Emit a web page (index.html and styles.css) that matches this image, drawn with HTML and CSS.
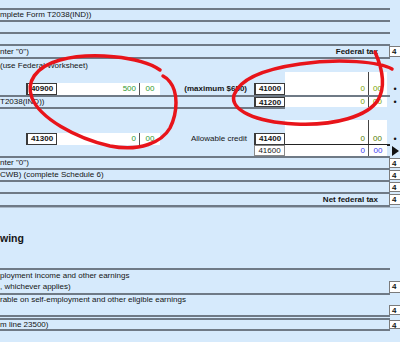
FILE: index.html
```html
<!DOCTYPE html>
<html lang="en">
<head>
    <meta charset="UTF-8">
    <title>Federal tax</title>
    <link rel="stylesheet" href="styles.css">
</head>
<body>
    <div class="form">
        <div class="band h8"></div>
        <div class="band h10"><span class="txt">mplete Form T2038(IND))</span></div>
        <div class="band h10"></div>
        <div class="band h10"></div>
        <div class="band h11">
            <span class="txt">nter "0")</span>
            <span class="lbl">Federal tax</span>
            <span class="tag">4</span>
        </div>

        <!-- 40900 / 41000 -->
        <div class="band block-a">
            <span class="txt first">(use Federal Worksheet)</span>
            <div class="wcol"></div>
            <div class="sep"></div>
            <div class="code left">40900</div>
            <div class="amt field left green">500</div>
            <div class="cents field left green">00</div>
            <span class="mid">(maximum $650)</span>
            <div class="code right">41000</div>
            <span class="amt right lime">0</span>
            <span class="cents right lime">00</span>
            <span class="dot">•</span>
        </div>
        <div class="band h10 short">
            <span class="txt">T2038(IND))</span>
            <div class="wcol"></div>
            <div class="sep"></div>
            <div class="code right">41200</div>
            <span class="amt right lime">0</span>
            <span class="cents right lime">00</span>
            <span class="dot">•</span>
        </div>

        <!-- 41300 / 41400 / 41600 -->
        <div class="band block-b">
            <div class="wcol"></div>
            <div class="sep"></div>
            <div class="code left">41300</div>
            <div class="amt field left green">0</div>
            <div class="cents field left green">00</div>
            <span class="mid plain">Allowable credit</span>
            <div class="code right">41400</div>
            <span class="amt right olive">0</span>
            <span class="cents right olive">00</span>
            <div class="thick"></div>
            <span class="dot">•</span>
            <div class="code right light">41600</div>
            <div class="amt field right blue">0</div>
            <div class="cents field right blue sepl">00</div>
            <span class="arrow"></span>
        </div>

        <div class="band h10"><span class="txt">nter "0")</span><span class="tag">4</span></div>
        <div class="band h10"><span class="txt">CWB) (complete Schedule 6)</span><span class="tag">4</span></div>
        <div class="band h10"><span class="tag">4</span></div>
        <div class="band h11"><span class="lbl">Net federal tax</span><span class="tag">4</span></div>

        <div class="band section"><span class="head">wing</span></div>

        <div class="band two">
            <span class="txt">ployment income and other earnings</span>
            <span class="txt second">, whichever applies)</span>
            <span class="tag second">4</span>
        </div>
        <div class="band two low">
            <span class="txt">rable on self-employment and other eligible earnings</span>
            <span class="tag second">4</span>
        </div>
        <div class="band h1"></div>
        <div class="band h9"><span class="txt">m line 23500)</span><span class="tag">4</span></div>

        <svg class="marks" width="400" height="342" viewBox="0 0 400 342">
            <path d="M160 70 C140 56 90 52 60 60 C35 67 26 82 32 98 C40 118 75 138 110 146 C140 152 162 142 170 128 C178 112 178 92 170 82 C168 79 165 77 163 76"/>
            <path d="M392 69 C380 62 340 58 300 64 C265 69 240 78 234 95 C230 110 255 122 295 124 C335 126 368 116 378 100 C386 86 383 70 375 52"/>
        </svg>
    </div>
</body>
</html>
```

FILE: styles.css
```css
/* Tax form, clipped view */
* {
    box-sizing: border-box;
}
body {
    margin: 0;
    background: #d6eafc;
    font-family: "Liberation Sans", Arial, sans-serif;
    font-size: 8px;
    color: #151515;
    overflow: hidden;
}
.form {
    position: relative;
    width: 400px;
    height: 342px;
}
.band {
    display: grid;
    grid-template-columns: 26px 31px 83px 20px 94px 31px 83px 19px 3px 10px;
    padding-bottom: 2px;
    background: linear-gradient(#6f7a86, #6f7a86) left bottom / 390px 2px no-repeat;
    line-height: 1;
}
.band > * {
    grid-row: 1;
    align-self: center;
    white-space: nowrap;
}
.h1 { grid-template-rows: 1px; }
.h8 { grid-template-rows: 8px; }
.h9 { grid-template-rows: 9px; }
.h10 { grid-template-rows: 10px; }
.h11 { grid-template-rows: 11px; }
.short {
    background-size: 285px 2px;
}
.txt {
    grid-column: 1 / 9;
}
.lbl {
    grid-column: 1 / 10;
    justify-self: end;
    padding-right: 12px;
    font-weight: bold;
}
.tag {
    grid-column: 10;
    align-self: stretch;
    margin-left: -1px;
    padding: 1px 0 0 2px;
    background: #fff;
    border: 1px solid #7b7b7b;
    border-right: none;
    font-weight: bold;
}

/* entry rows */
.block-a {
    grid-template-rows: 13px 11px 12px;
}
.block-b {
    grid-template-rows: 11px 13px 12px 11px;
}
.block-a > *, .block-b > * {
    grid-row: 3;
}
.block-a .first {
    grid-row: 1;
}
.wcol {
    grid-column: 7 / 9;
    grid-row: 2 / 4 !important;
    align-self: stretch;
    background: #fff;
}
.short .wcol, .short .sep {
    grid-row: 1 !important;
}
.sep {
    grid-column: 8;
    grid-row: 2 / 4 !important;
    align-self: stretch;
    border-left: 1px solid #444;
}
.code {
    align-self: stretch;
    background: #fff;
    border: 1px solid #3a3a3a;
    border-left-width: 2px;
    text-align: center;
    font-weight: bold;
    padding-top: 1px;
}
.code.left { grid-column: 2; }
.code.right { grid-column: 6; }
.code.light {
    border: 1px solid #8a8a8a;
    font-weight: normal;
    color: #222;
}
.field {
    align-self: stretch;
    background: #fff;
    padding-top: 2px;
}
.amt {
    text-align: right;
    padding-right: 3px;
}
.amt.left { grid-column: 3; border-right: 1px solid #555; }
.amt.right { grid-column: 7; }
.cents {
    text-align: center;
}
.cents.left { grid-column: 4; }
.cents.right { grid-column: 8; }
.sepl {
    border-left: 1px solid #555;
}
.mid {
    grid-column: 5;
    justify-self: end;
    padding-right: 7px;
    font-weight: bold;
}
.mid.plain {
    font-weight: normal;
}
.green { color: #2f9a2f; }
.lime { color: #78a400; }
.olive { color: #4f7c00; }
.blue { color: #3b3bf2; }
.dot {
    grid-column: 10;
    justify-self: center;
    font-size: 9px;
}
.thick {
    grid-column: 7 / 10;
    align-self: end;
    height: 2px;
    margin-bottom: -1px;
    background: #222;
}
.block-b .light, .block-b .blue, .block-b .arrow {
    grid-row: 4;
}
.arrow {
    grid-column: 10;
    justify-self: start;
    margin-left: 2px;
    width: 0;
    height: 0;
    border-left: 7px solid #111;
    border-top: 5px solid transparent;
    border-bottom: 5px solid transparent;
}

/* lower part */
.section {
    grid-template-rows: 60px;
    border-top: 1px solid #a9b8c7;
}
.head {
    grid-column: 1 / 9;
    font-size: 10.5px;
    font-weight: bold;
}
.two {
    grid-template-rows: 11px 12px;
}
.two.low {
    grid-template-rows: 10px 10px;
}
.two .second {
    grid-row: 2;
}

.marks {
    position: absolute;
    top: 0;
    left: 0;
    pointer-events: none;
}
.marks path {
    fill: none;
    stroke: #e8141a;
    stroke-width: 3.5;
    stroke-linecap: round;
}
```
